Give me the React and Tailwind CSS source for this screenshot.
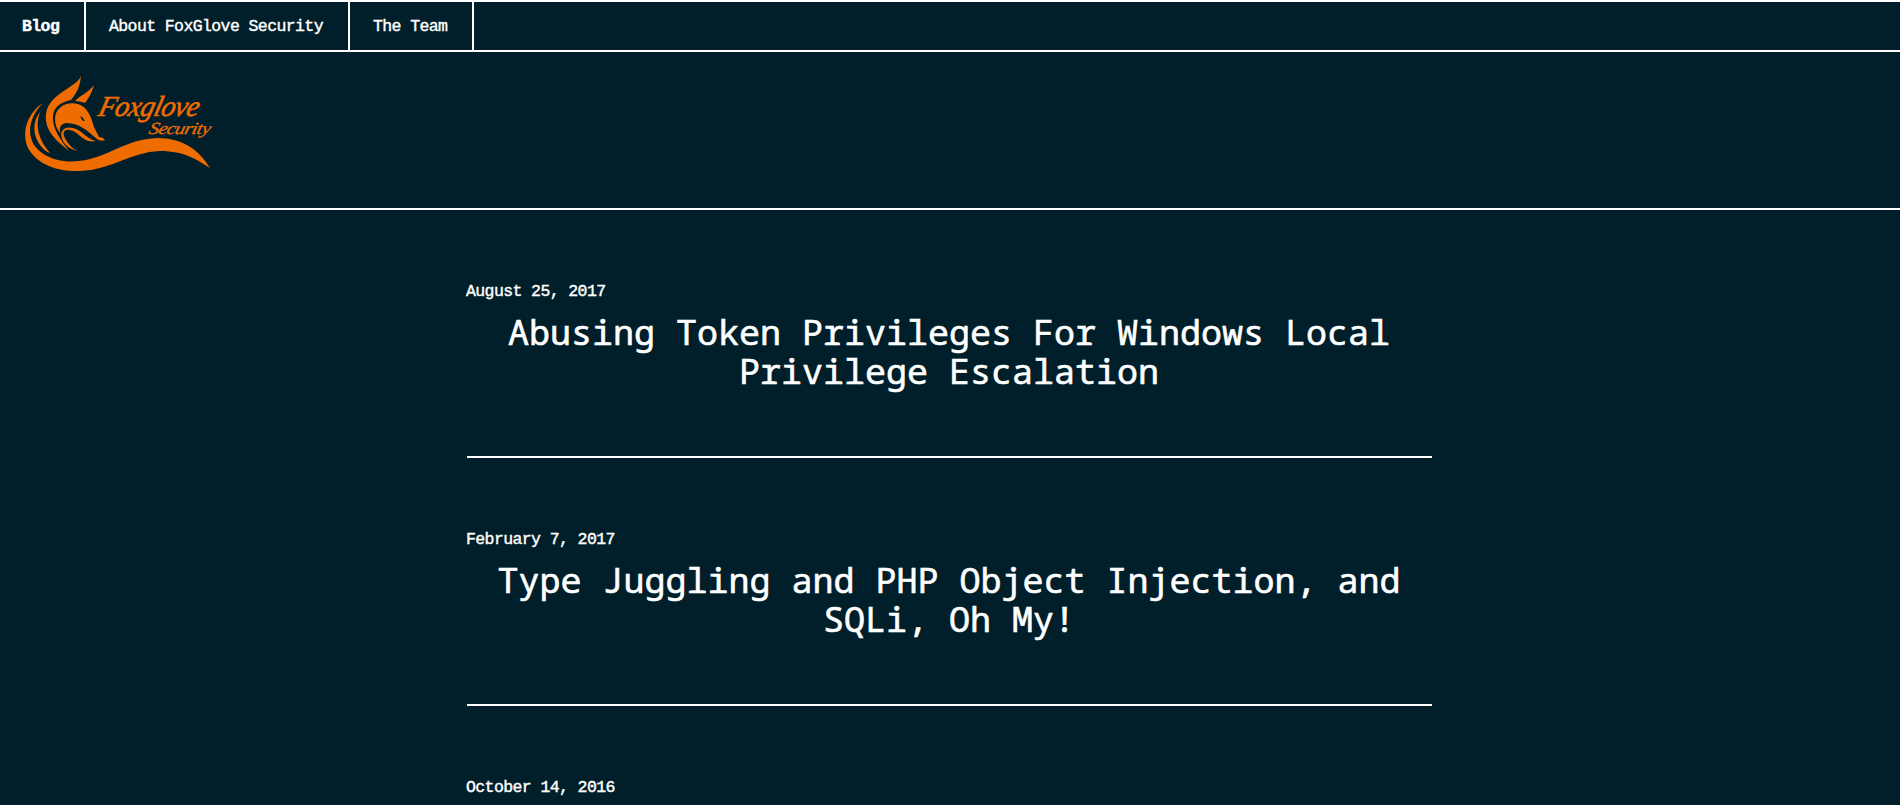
const navItems = [
  { label: 'Blog', width: 'w-[86px] pl-[22px] font-bold' },
  { label: 'About FoxGlove Security', width: 'w-[264px] pl-[23px]' },
  { label: 'The Team', width: 'w-[124px] pl-[23px]' },
];

const posts = [
  { date: 'August 25, 2017', lines: ['Abusing Token Privileges For Windows Local', 'Privilege Escalation'] },
  { date: 'February 7, 2017', lines: ['Type Juggling and PHP Object Injection, and', 'SQLi, Oh My!'] },
  { date: 'October 14, 2016', lines: [] },
];

function Logo() {
  return (
    <svg className="block h-[115px] w-[210px]" viewBox="15 65 210 115" fill="#ef6c00" aria-label="Foxglove Security">
      <path d="M43 103 C25 115 22 135 28 148 C38 166 60 172 80 171 C112 170 130 152 160 151 C185 151 197 160 210 168 C199 150 183 138 157 138 C125 139 108 158 79 161 C55 164 37 153 32 141 C27 128 32 114 43 103Z" />
      <path d="M40 112 C28 127 37 148 50 153 C38 139 35 126 40 112Z" />
      <path d="M81 76 C76 88 49 93 46 114 C44 131 57 141 69 151 C60 139 52 128 53 116 C54 106 62 102 71 100 C77 93 80 86 81 76Z" />
      <path d="M94 85 C88 93 79 96 75 101 C79 101 82 102 85 103 C89 98 92 92 94 85Z" />
      <path d="M55 119 C55 107 67 101 78 104 C88 107 91 117 94 127 L99 137 C101 137 104 138 105 140 C103 141 99 141 97 139 C88 132 81 123 66 123 C61 124 58 128 61 134 C57 130 55 125 55 119Z M80 116 C82 120 82 121 85 121 C83 119 84 118 80 116Z" fillRule="evenodd" />
      <path d="M62 139 C59 130 65 126 73 128 C84 131 86 139 96 141 C83 144 80 132 70 130 C63 129 62 134 66 140 C69 145 73 149 78 151 C70 149 65 146 62 139Z" />
      <g fontFamily="'Liberation Serif', serif" fontStyle="italic" stroke="#ef6c00">
        <text transform="translate(97 116) skewX(-14)" fontSize="29" textLength="100" lengthAdjust="spacingAndGlyphs" strokeWidth=".6">Foxglove</text>
        <text transform="translate(148 134) skewX(-14)" fontSize="17" textLength="61" lengthAdjust="spacingAndGlyphs" strokeWidth=".3">Security</text>
      </g>
    </svg>
  );
}

export default function App() {
  return (
    <div className="h-[805px] overflow-hidden bg-[#001f2a] font-['Liberation_Mono',monospace] text-[16.5px] tracking-[-0.6px] text-white">
      <nav className="flex h-[52px] border-y-2 border-white leading-[50px] [-webkit-text-stroke:0.4px_white]">
        {navItems.map((item) => (
          <a key={item.label} className={`block h-[48px] shrink-0 border-r-2 border-white whitespace-nowrap ${item.width}`}>{item.label}</a>
        ))}
      </nav>
      <header className="h-[158px] border-b-2 border-white pt-[13px] pl-[15px]">
        <Logo />
      </header>
      <main className="ml-[467px] w-[965px]">
        {posts.map((post) => (
          <article key={post.date} className="h-[248px] border-b-2 border-white pt-[71px]">
            <time className="-ml-px block h-[21px] leading-[21px] [-webkit-text-stroke:0.4px_white]">{post.date}</time>
            <h2 className="-ml-px mt-[10px] text-center font-['Noto_Sans_Mono','DejaVu_Sans_Mono',monospace] text-[35px] leading-[39px] tracking-normal [-webkit-text-stroke:0.6px_white]">
              {post.lines.map((line) => (
                <span key={line} className="block whitespace-nowrap">{line}</span>
              ))}
            </h2>
          </article>
        ))}
      </main>
    </div>
  );
}
